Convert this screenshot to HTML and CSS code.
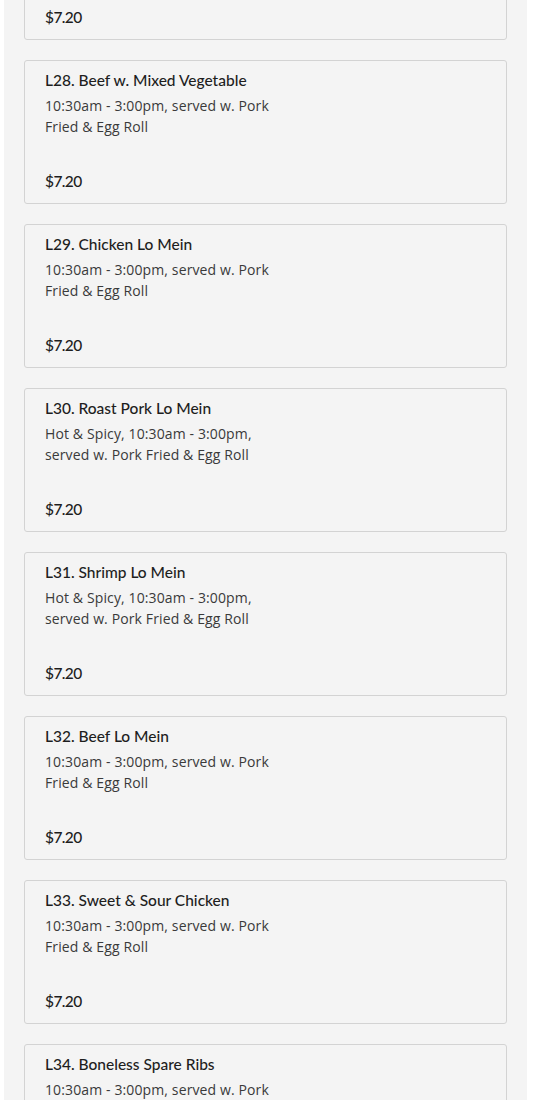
FILE: index.html
```html
<!DOCTYPE html>
<html lang="en">
<head>
  <meta charset="UTF-8" />
  <meta name="viewport" content="width=device-width, initial-scale=1.0"/>
  <title>Lunch Specials</title>
  <link rel="stylesheet" href="styles.css">
</head>
<body>

<!-- Lunch menu list -->
<div class="menu-section">
  <div class="menu-list">
    <div class="menu-item">
      <h3 class="item-name">L27. Chicken w. Mixed Vegetable</h3>
      <p class="item-desc">10:30am - 3:00pm, served w. Pork Fried &amp; Egg Roll</p>
      <p class="item-price">$7.20</p>
    </div>
    <div class="menu-item">
      <h3 class="item-name">L28. Beef w. Mixed Vegetable</h3>
      <p class="item-desc">10:30am - 3:00pm, served w. Pork Fried &amp; Egg Roll</p>
      <p class="item-price">$7.20</p>
    </div>
    <div class="menu-item">
      <h3 class="item-name">L29. Chicken Lo Mein</h3>
      <p class="item-desc">10:30am - 3:00pm, served w. Pork Fried &amp; Egg Roll</p>
      <p class="item-price">$7.20</p>
    </div>
    <div class="menu-item">
      <h3 class="item-name">L30. Roast Pork Lo Mein</h3>
      <p class="item-desc">Hot &amp; Spicy, 10:30am - 3:00pm, served w. Pork Fried &amp; Egg Roll</p>
      <p class="item-price">$7.20</p>
    </div>
    <div class="menu-item">
      <h3 class="item-name">L31. Shrimp Lo Mein</h3>
      <p class="item-desc">Hot &amp; Spicy, 10:30am - 3:00pm, served w. Pork Fried &amp; Egg Roll</p>
      <p class="item-price">$7.20</p>
    </div>
    <div class="menu-item">
      <h3 class="item-name">L32. Beef Lo Mein</h3>
      <p class="item-desc">10:30am - 3:00pm, served w. Pork Fried &amp; Egg Roll</p>
      <p class="item-price">$7.20</p>
    </div>
    <div class="menu-item">
      <h3 class="item-name">L33. Sweet &amp; Sour Chicken</h3>
      <p class="item-desc">10:30am - 3:00pm, served w. Pork Fried &amp; Egg Roll</p>
      <p class="item-price">$7.20</p>
    </div>
    <div class="menu-item">
      <h3 class="item-name">L34. Boneless Spare Ribs</h3>
      <p class="item-desc">10:30am - 3:00pm, served w. Pork Fried &amp; Egg Roll</p>
      <p class="item-price">$7.20</p>
    </div>
  </div>
</div>

</body>
</html>
```

FILE: styles.css
```css
* {
  margin: 0;
  padding: 0;
  box-sizing: border-box;
}

body {
  font-family: 'Open Sans', sans-serif;
  background-color: #ffffff;
  color: #222;
  padding: 0 18px 0 4px;
  height: 1100px;
  overflow: hidden;
}

/* Section wrapper */
.menu-section {
  background-color: #f4f4f4;
  padding: 0 20px 20px;
  min-height: 1100px;
}

.menu-list {
  display: flex;
  flex-direction: column;
  gap: 20px;
  margin-top: -104px; /* list is scrolled part way */
}

/* Card */
.menu-item {
  background-color: #f4f4f4;
  border: 1px solid #d3d3d3;
  border-radius: 3px;
  padding: 8px 20px 11px;
  height: 144px;
  display: flex;
  flex-direction: column;
}

.item-name {
  font-family: 'Lato', sans-serif;
  font-size: 15.5px;
  font-weight: 500;
  line-height: 22px;
  color: #1e1e1e;
}

.item-desc {
  font-size: 14px;
  line-height: 21px;
  letter-spacing: 0.12px;
  color: #3a3a3a;
  max-width: 238px;
  margin-top: 4px;
}

.item-price {
  font-family: 'Lato', sans-serif;
  font-size: 15.5px;
  font-weight: 500;
  line-height: 22px;
  letter-spacing: -0.6px;
  color: #1e1e1e;
  margin-top: auto;
}
```
